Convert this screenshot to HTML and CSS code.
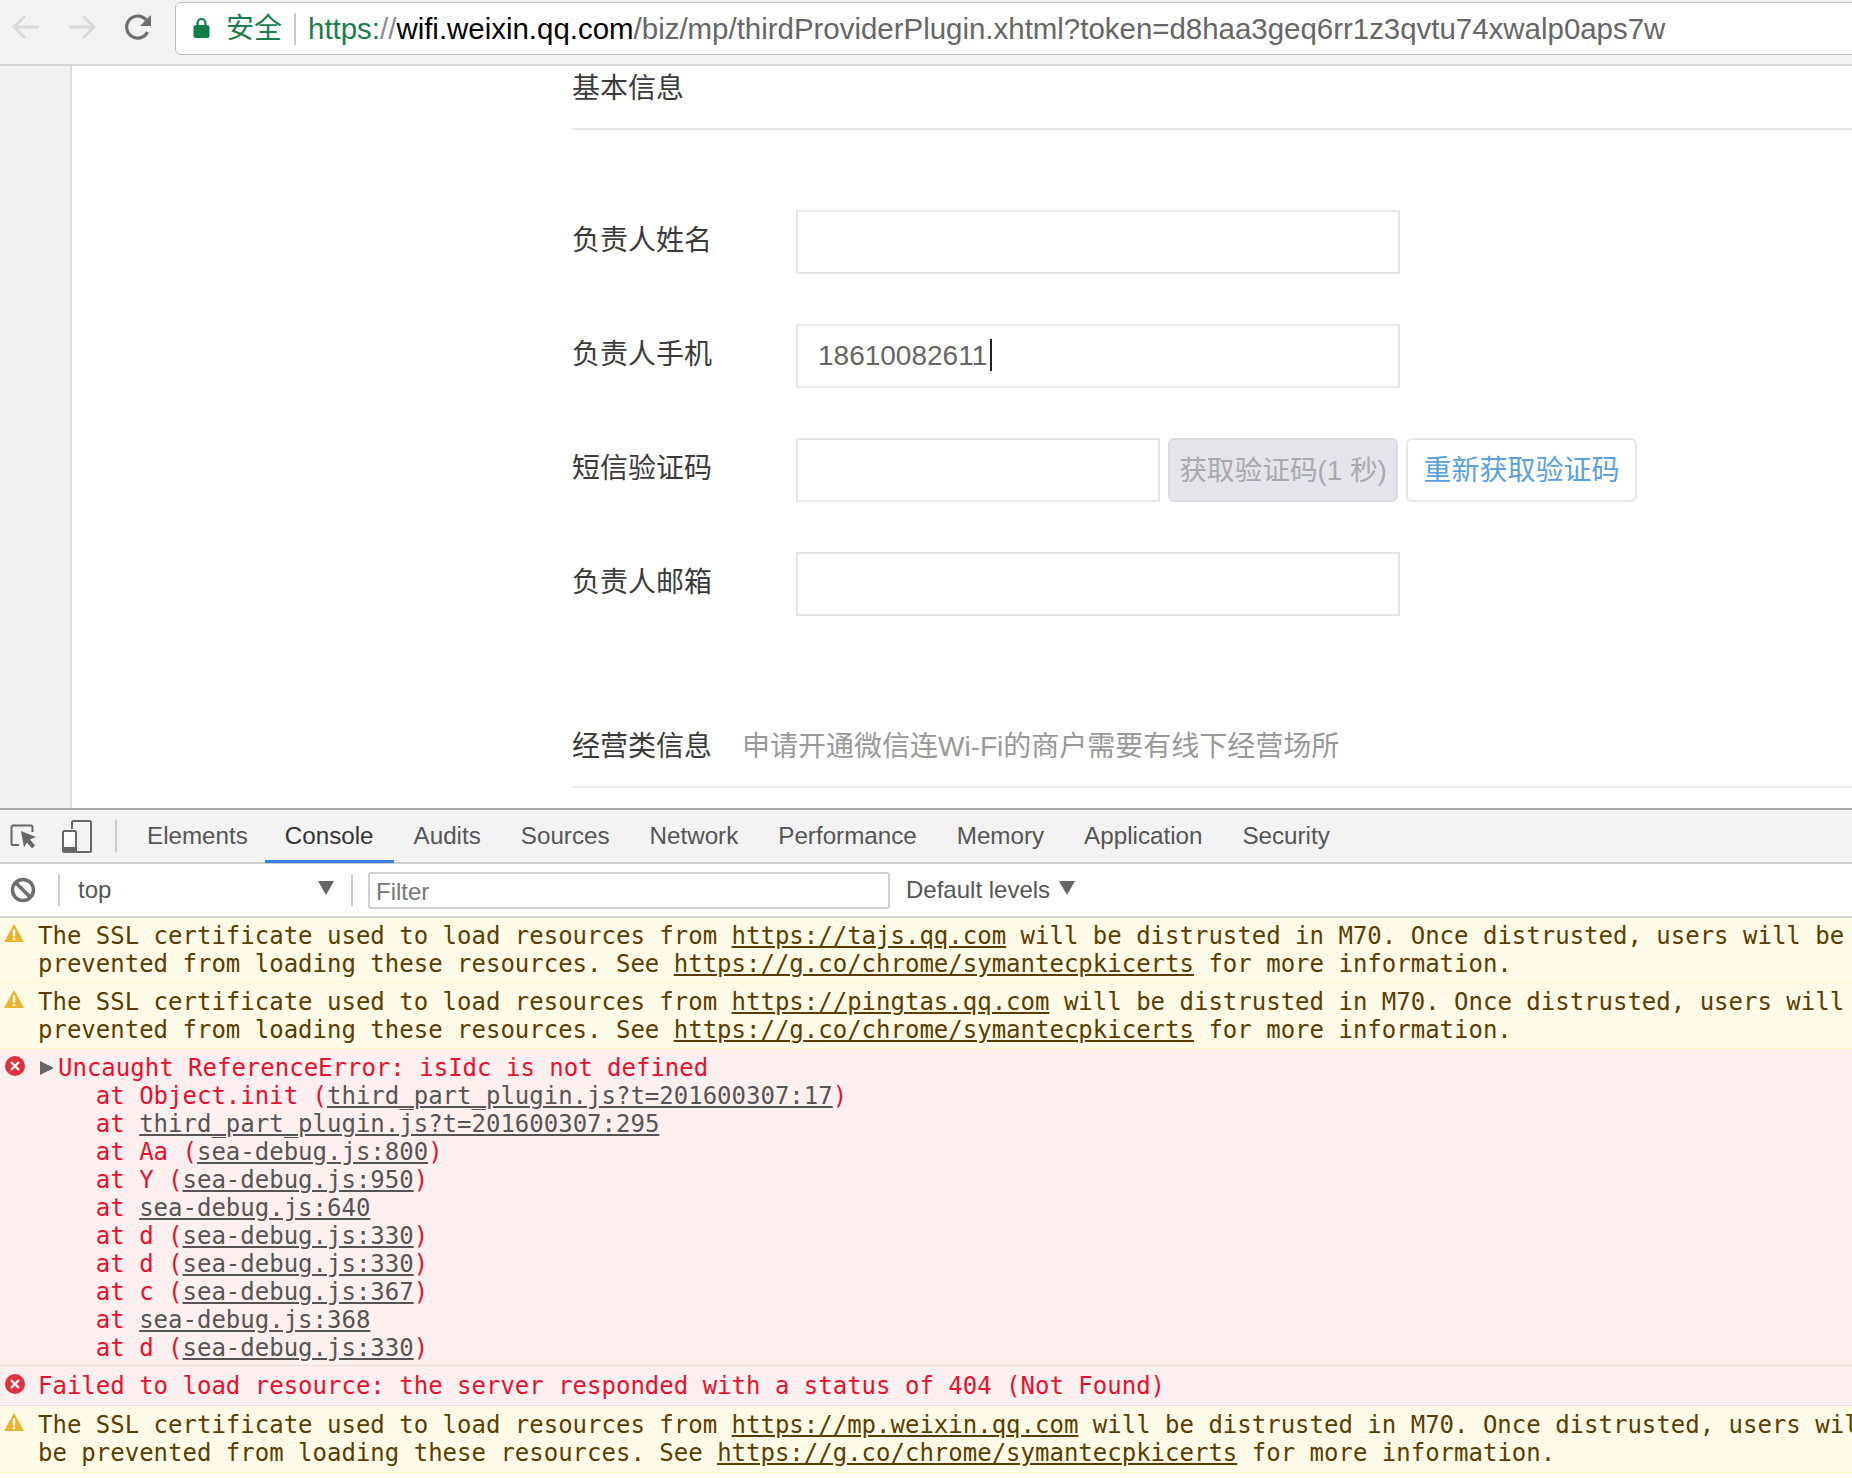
FILE: index.html
```html
<!DOCTYPE html>
<html lang="zh-CN">
<head>
<meta charset="utf-8">
<title>thirdProviderPlugin</title>
<link rel="stylesheet" href="styles.css">
</head>
<body>
<header class="browser-bar">
  <svg class="nav-icon nav-back" viewBox="0 0 28 26"><path d="M27 13H3M13 2 2 13l11 11" fill="none" stroke="#dadada" stroke-width="3"/></svg>
  <svg class="nav-icon nav-forward" viewBox="0 0 28 26"><path d="M1 13h24M15 2l11 11-11 11" fill="none" stroke="#dadada" stroke-width="3"/></svg>
  <svg class="nav-icon nav-reload" viewBox="0 0 28 26"><path d="M23.5 18a11 11 0 1 1 .2-9.5" fill="none" stroke="#6e6e6e" stroke-width="3.2"/><path d="M27 1v11H16z" fill="#6e6e6e"/></svg>
  <div class="omnibox">
    <svg class="lock" viewBox="0 0 16 21"><path d="M4 9V6a4 4 0 0 1 8 0v3" fill="none" stroke="#0f7f45" stroke-width="2.2"/><rect x="0" y="8" width="16" height="13" rx="2.5" fill="#0f7f45"/></svg>
    <span class="secure">安全</span>
    <span class="omni-sep"></span>
    <span class="url"><span class="url-scheme">https:</span><span class="url-slash">//</span><span class="url-host">wifi.weixin.qq.com</span><span class="url-path">/biz/mp/thirdProviderPlugin.xhtml?token=d8haa3geq6rr1z3qvtu74xwalp0aps7w</span></span>
  </div>
</header>

<main class="page">
  <aside class="side"></aside>
  <section class="content">
    <h2 class="section-head">基本信息</h2>
    <form class="form">
      <div class="row"><label class="label">负责人姓名</label><div class="field"></div></div>
      <div class="row"><label class="label">负责人手机</label><div class="field field-filled">18610082611<span class="caret"></span></div></div>
      <div class="row">
        <label class="label">短信验证码</label>
        <div class="field field-code"></div>
        <button type="button" class="btn btn-disabled">获取验证码(1 秒)</button>
        <button type="button" class="btn btn-link">重新获取验证码</button>
      </div>
      <div class="row"><label class="label">负责人邮箱</label><div class="field"></div></div>
    </form>
    <h2 class="section-head section-head-second">经营类信息<span class="section-note">申请开通微信连Wi-Fi的商户需要有线下经营场所</span></h2>
  </section>
</main>

<section class="devtools">
  <nav class="tabs">
    <svg class="dt-inspect" viewBox="0 0 28 26"><path d="M9 21H3a1.500 1.500 0 0 1-1.500-1.500V3A1.500 1.500 0 0 1 3 1.500h18A1.500 1.500 0 0 1 22.500 3v5" fill="none" stroke="#666" stroke-width="2"/><path d="M11 7l15 6-6 2.500 5 6-3 3-5-6-3 5z" fill="#666"/></svg>
    <svg class="dt-device" viewBox="0 0 30 33"><path d="M10 9V2.500A1.500 1.500 0 0 1 11.500 1h16A1.500 1.500 0 0 1 29 2.500v28a1.500 1.500 0 0 1-1.500 1.500H14" fill="none" stroke="#666" stroke-width="2"/><rect x="1" y="11" width="13" height="21" rx="1.500" fill="#fff" stroke="#666" stroke-width="2"/><rect x="1" y="27" width="13" height="5" fill="#666"/></svg>
    <span class="dt-sep dt-sep-tabs"></span>
    <a class="tab">Elements</a>
    <a class="tab tab-active">Console</a>
    <a class="tab">Audits</a>
    <a class="tab">Sources</a>
    <a class="tab">Network</a>
    <a class="tab">Performance</a>
    <a class="tab">Memory</a>
    <a class="tab">Application</a>
    <a class="tab">Security</a>
  </nav>
  <div class="console-bar">
    <svg class="dt-clear" viewBox="0 0 26 26"><circle cx="13" cy="13" r="10.500" fill="none" stroke="#6e6e6e" stroke-width="3.500"/><path d="M5.500 5.500l15 15" stroke="#6e6e6e" stroke-width="3.500"/></svg>
    <span class="dt-sep dt-sep-clear"></span>
    <div class="context"><span>top</span><span class="tri"></span></div>
    <span class="dt-sep"></span>
    <div class="filter">Filter</div>
    <div class="levels"><span>Default levels</span><span class="tri"></span></div>
  </div>
  <div class="messages">
    <div class="msg msg-warn msg-first">
      <svg class="msg-icon" viewBox="0 0 20 18"><path d="M10 0 20 18H0z" fill="#e9b32f"/><rect x="8.800" y="5.500" width="2.400" height="7" fill="#fff"/><rect x="8.800" y="13.800" width="2.400" height="2.400" fill="#fff"/></svg>
      <div class="msg-text"><div>The SSL certificate used to load resources from <a class="lnk">https://tajs.qq.com</a> will be distrusted in M70. Once distrusted, users will be</div><div>prevented from loading these resources. See <a class="lnk">https://g.co/chrome/symantecpkicerts</a> for more information.</div></div>
    </div>
    <div class="msg msg-warn msg-second">
      <svg class="msg-icon" viewBox="0 0 20 18"><path d="M10 0 20 18H0z" fill="#e9b32f"/><rect x="8.800" y="5.500" width="2.400" height="7" fill="#fff"/><rect x="8.800" y="13.800" width="2.400" height="2.400" fill="#fff"/></svg>
      <div class="msg-text"><div>The SSL certificate used to load resources from <a class="lnk">https://pingtas.qq.com</a> will be distrusted in M70. Once distrusted, users will</div><div>prevented from loading these resources. See <a class="lnk">https://g.co/chrome/symantecpkicerts</a> for more information.</div></div>
    </div>
    <div class="msg msg-err msg-stack">
      <svg class="msg-icon msg-icon-err" viewBox="0 0 20 20"><circle cx="10" cy="10" r="10" fill="#e3303f"/><path d="M6 6l8 8M14 6l-8 8" stroke="#fff" stroke-width="2.400"/></svg>
      <div class="msg-text">
        <div class="err-first">Uncaught ReferenceError: isIdc is not defined</div>
        <div>    at Object.init (<a class="lnk">third_part_plugin.js?t=201600307:17</a>)</div>
        <div>    at <a class="lnk">third_part_plugin.js?t=201600307:295</a></div>
        <div>    at Aa (<a class="lnk">sea-debug.js:800</a>)</div>
        <div>    at Y (<a class="lnk">sea-debug.js:950</a>)</div>
        <div>    at <a class="lnk">sea-debug.js:640</a></div>
        <div>    at d (<a class="lnk">sea-debug.js:330</a>)</div>
        <div>    at d (<a class="lnk">sea-debug.js:330</a>)</div>
        <div>    at c (<a class="lnk">sea-debug.js:367</a>)</div>
        <div>    at <a class="lnk">sea-debug.js:368</a></div>
        <div>    at d (<a class="lnk">sea-debug.js:330</a>)</div>
      </div>
    </div>
    <div class="msg msg-err msg-single">
      <svg class="msg-icon msg-icon-err" viewBox="0 0 20 20"><circle cx="10" cy="10" r="10" fill="#e3303f"/><path d="M6 6l8 8M14 6l-8 8" stroke="#fff" stroke-width="2.400"/></svg>
      <div class="msg-text"><div>Failed to load resource: the server responded with a status of 404 (Not Found)</div></div>
    </div>
    <div class="msg msg-warn">
      <svg class="msg-icon" viewBox="0 0 20 18"><path d="M10 0 20 18H0z" fill="#e9b32f"/><rect x="8.800" y="5.500" width="2.400" height="7" fill="#fff"/><rect x="8.800" y="13.800" width="2.400" height="2.400" fill="#fff"/></svg>
      <div class="msg-text"><div>The SSL certificate used to load resources from <a class="lnk">https://mp.weixin.qq.com</a> will be distrusted in M70. Once distrusted, users will</div><div>be prevented from loading these resources. See <a class="lnk">https://g.co/chrome/symantecpkicerts</a> for more information.</div></div>
    </div>
  </div>
</section>
</body>
</html>
```

FILE: styles.css
```css
* { box-sizing: border-box; }
html, body { margin: 0; padding: 0; }
body {
  width: 1852px;
  height: 1478px;
  overflow: hidden;
  background: #fff;
  display: flex;
  flex-direction: column;
  font-family: "Liberation Sans", "Noto Sans CJK SC", sans-serif;
}

/* browser chrome */
.browser-bar {
  flex: none;
  height: 66px;
  background: #f2f2f2;
  border-bottom: 2px solid #d6d6d6;
  display: flex;
  align-items: flex-start;
  padding: 14px 0 0 12px;
  overflow: hidden;
}
.nav-icon { flex: none; width: 28px; height: 26px; }
.nav-forward { margin-left: 28px; }
.nav-reload { margin-left: 28px; }
.omnibox {
  flex: none;
  width: 1700px;
  height: 53px;
  margin: -12px 0 0 23px;
  background: #fff;
  border: 1.5px solid #bdbdbd;
  border-radius: 6px;
  display: flex;
  align-items: center;
  padding-left: 17px;
}
.lock { flex: none; width: 17px; height: 21px; margin-top: -2px; }
.secure { color: #1c7d4b; font-size: 28px; line-height: 36px; margin-left: 16px; }
.omni-sep { width: 2px; height: 32px; background: #c9c9c9; margin: 0 12px; }
.url { font-size: 29.440px; line-height: 40px; white-space: nowrap; color: #666; }
.url-scheme { color: #1c7d4b; }
.url-slash { color: #8a8a8a; }
.url-host { color: #000; }
.url-path { color: #666; }

/* page */
.page {
  flex: none;
  height: 742px;
  display: flex;
  overflow: hidden;
}
.side {
  flex: none;
  width: 72px;
  background: #f1f1f1;
  border-right: 2px solid #dedede;
}
.content { flex: 1; padding-left: 500px; color: #333; }
.section-head {
  margin: 0;
  font-size: 28px;
  font-weight: 400;
  line-height: 42px;
  padding: 2px 0 18px;
  border-bottom: 2px solid #e7e7e7;
  color: #3a3a3a;
}
.section-head-second { margin-top: 108px; }
.section-note { color: #999; margin-left: 30px; }
.form {
  display: flex;
  flex-direction: column;
  gap: 50px;
  margin-top: 80px;
}
.row { display: flex; align-items: center; height: 64px; }
.label { flex: none; width: 224px; font-size: 28px; line-height: 40px; color: #3a3a3a; margin-top: -2px; }
.field {
  flex: none;
  width: 604px;
  height: 64px;
  border: 2px solid #e6e6e6;
  background: #fff;
}
.field-filled {
  font-size: 28px;
  line-height: 60px;
  padding-left: 20px;
  color: #666;
}
.caret {
  display: inline-block;
  width: 2px;
  height: 32px;
  margin-left: 3px;
  background: #222;
  vertical-align: -6px;
}
.field-code { width: 364px; }
.btn {
  flex: none;
  height: 64px;
  padding: 0;
  font: 28px/62px "Liberation Sans", "Noto Sans CJK SC", sans-serif;
  border-radius: 6px;
  white-space: nowrap;
}
.btn-disabled {
  width: 230px;
  margin-left: 8px;
  background: #e4e5ea;
  border: 2px solid #dcdde2;
  color: #aaa;
  font-size: 27.700px;
}
.btn-link {
  width: 231px;
  margin-left: 8px;
  background: #fff;
  border: 2px solid #e6e6e6;
  color: #5aa0dc;
}

/* devtools */
.devtools {
  flex: 1;
  min-height: 0;
  display: flex;
  flex-direction: column;
  border-top: 2px solid #a8a8a8;
  overflow: hidden;
}
.tabs {
  flex: none;
  height: 54px;
  background: #f3f3f3;
  border-bottom: 2px solid #cdcdcd;
  display: flex;
  align-items: center;
  font-size: 24.200px;
  color: #555;
  padding-left: 10px;
}
.dt-inspect { flex: none; width: 28px; height: 26px; margin-top: 2px; }
.dt-device { flex: none; width: 30px; height: 33px; margin-left: 24px; }
.dt-sep { flex: none; width: 2px; height: 32px; background: #ccc; }
.dt-sep-tabs { margin: 0 10px 0 23px; }
.tab {
  height: 54px;
  line-height: 54px;
  padding: 0 20px;
  flex: none;
  color: #555;
}
.tab-active { color: #333; border-bottom: 3px solid #3f7fdc; margin-left: -3px; }
.console-bar {
  flex: none;
  height: 54px;
  background: #fff;
  border-bottom: 2px solid #d6d6d6;
  display: flex;
  align-items: center;
  font-size: 24px;
  color: #555;
  padding-left: 10px;
}
.dt-clear { flex: none; width: 26px; height: 26px; }
.dt-sep-clear { margin-left: 22px; }
.context {
  flex: none;
  width: 291px;
  padding: 0 17px 0 18px;
  display: flex;
  justify-content: space-between;
  align-items: center;
}
.tri {
  display: block;
  width: 0;
  height: 0;
  border-left: 8px solid transparent;
  border-right: 8px solid transparent;
  border-top: 14px solid #666;
  margin-top: -4px;
}
.filter {
  flex: none;
  width: 522px;
  height: 37px;
  margin-left: 15px;
  border: 2px solid #d0d0d0;
  border-radius: 3px;
  padding-left: 6px;
  line-height: 35px;
  color: #777;
}
.levels { display: flex; align-items: center; gap: 9px; margin-left: 16px; }
.messages {
  flex: 1;
  font: 24px/28px "DejaVu Sans Mono", monospace;
}
.msg {
  display: flex;
  padding: 5px 0;
  overflow: hidden;
}
.msg-first { padding: 4px 0; }
.msg-second { padding-bottom: 4px; }
.msg-warn { background: #fffbe7; border-bottom: 1px solid #fff5c2; color: #5c3c00; }
.msg-err { background: #fff0f0; border-bottom: 1px solid #ffd6d6; color: #e8112d; }
.msg-stack { padding-bottom: 3px; }
.msg-single { padding-top: 6px; }
.msg-icon { flex: none; width: 20px; height: 18px; margin: 2px 14px 0 4px; }
.msg-icon-err { height: 20px; margin: 2px 13px 0 5px; }
.msg-text { flex: none; }
.msg-text > div { white-space: pre; }
.err-first { position: relative; padding-left: 20px; }
.err-first::before {
  content: "";
  position: absolute;
  left: 2px;
  top: 7px;
  border-left: 14px solid #666;
  border-top: 7px solid transparent;
  border-bottom: 7px solid transparent;
}
.lnk { color: #555; text-decoration: underline; }
.msg-warn .lnk { color: #5c3c00; }
```
